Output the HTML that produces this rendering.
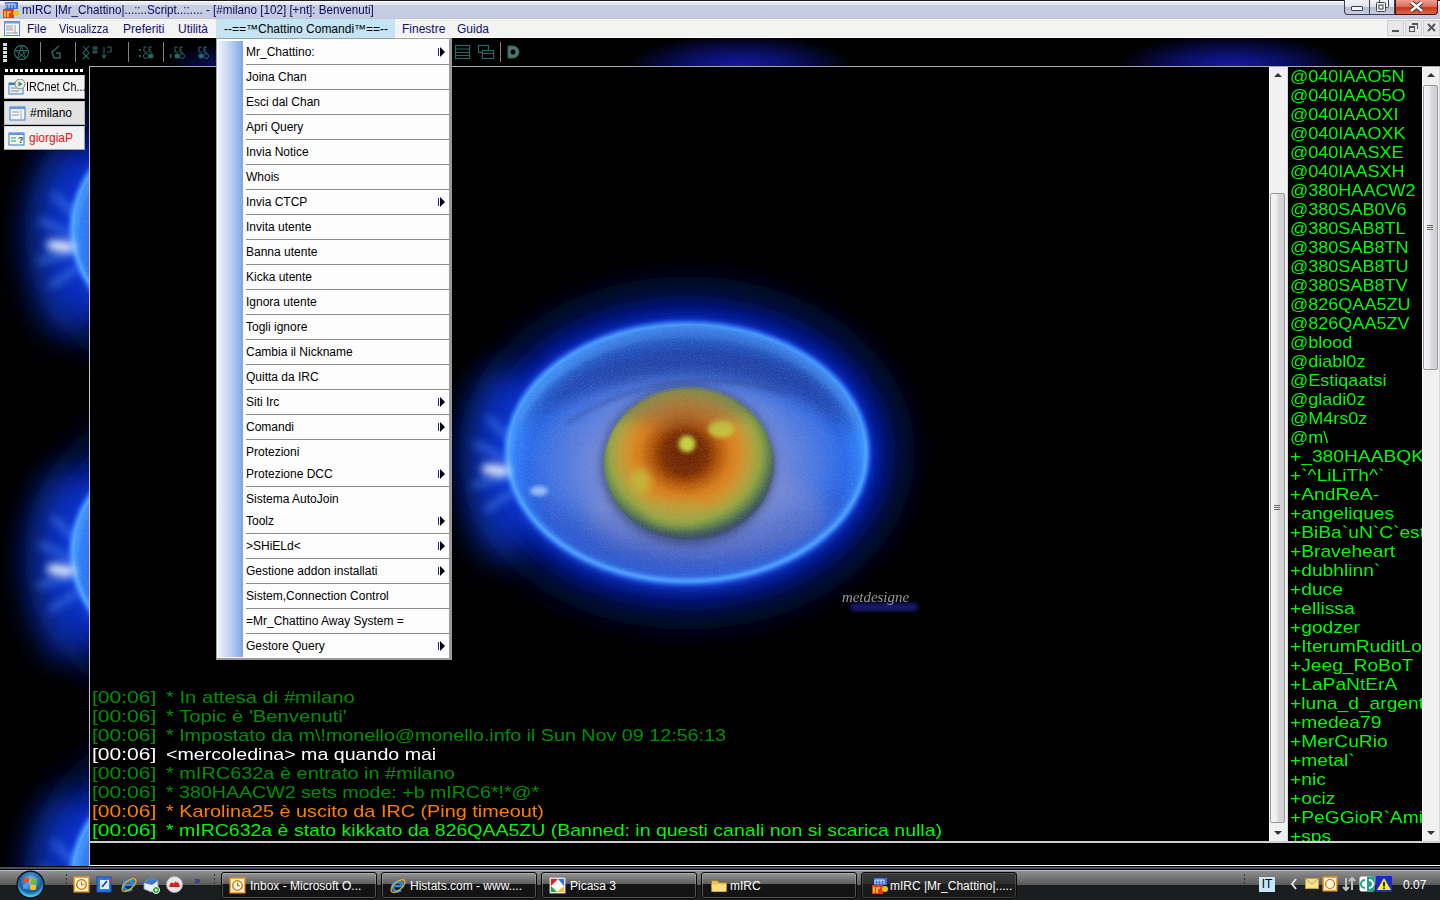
<!DOCTYPE html>
<html><head><meta charset="utf-8">
<style>
*{margin:0;padding:0;box-sizing:border-box}
html,body{width:1440px;height:900px;overflow:hidden;background:#000;font-family:"Liberation Sans",sans-serif}
.a{position:absolute}
#title{left:0;top:0;width:1440px;height:19px;background:linear-gradient(#1a1a1a 0,#1a1a1a 1px,#fff 1px,#fff 2px,#e8eaf3 2px,#e2e5f0 5px,#c8cee2 5px,#c4cadf 18px,#c0c4dc 18px);}
#title .t{left:22px;top:3px;font-size:12px;color:#0a0a5e;white-space:pre;transform:scaleX(0.97);transform-origin:0 0}
#menubar{left:0;top:19px;width:1440px;height:19px;background:#f3f3f1;border-bottom:1px solid #fff}
#menubar .m{top:3px;font-size:12px;color:#10106a;white-space:pre}
#hl{left:216px;top:0;width:179px;height:19px;background:#c4e4f4}
#tb{left:0;top:38px;width:1440px;height:28px;overflow:hidden}
#bgsvg{left:0;top:0}
#sw{left:0;top:66px;width:89px;height:800px}
.swb{left:4px;width:81px;height:24px;background:#f2f2f2;border:1px solid #d8d8d8;border-bottom-color:#a0a0a0;border-right-color:#a0a0a0;font-size:12px;white-space:pre}
#chatwin{left:89px;top:66px;width:1351px;height:800px;background:#000;border-top:1px solid #a8a8a8;border-left:1px solid #a8a8a8}
#chat{left:0;top:0;width:1179px;height:774px;overflow:hidden;background:#000}
.cl{font-size:17px;white-space:pre;transform-origin:0 0;line-height:19px}
#nick{left:1198px;top:0;width:134px;height:774px;overflow:hidden;background:#000}
.nk{left:2px;font-size:17px;white-space:pre;color:#00fc00;line-height:19px;transform-origin:0 0}
#taskbar{left:0;top:866px;width:1440px;height:34px;background:linear-gradient(#000 0,#000 1px,#4a5066 1px,#4a5066 3px,#000 3px,#000 4px,#c0c2c0 4px,#c0c2c0 5px,#8e8e8e 5px,#5a5a5a 19px,#1c1d1f 19px,#1c1d1f 34px)}
#menu{left:216px;top:38px;width:236px;height:622px;background:#fdfdfd;border:1px solid #a0a0a0;border-right:3px solid #9a9a9a;border-bottom:2px solid #9a9a9a}
#mgrad{left:1px;top:2px;width:25px;height:616px;background:linear-gradient(90deg,#eef2fc,#c8d8f2 40%,#7ea6e6)}
.mi{left:29px;height:22px;line-height:22px;font-size:12px;color:#000;white-space:pre}
.sep{left:29px;width:203px;height:1px;background:#8c8c8c}
.arr{left:223px;width:0;height:0;border-top:5px solid transparent;border-bottom:5px solid transparent;border-left:5px solid #000}
.arr:before{content:"";position:absolute;left:-7px;top:-4px;width:1px;height:8px;background:#1a2a8a}

.sb{background:#f0f0f0;border-left:1px solid #fff;border-right:1px solid #d8d8d8}
.thumb{border:1px solid #9a9a9a;border-radius:2px;background:linear-gradient(90deg,#f6f6f6,#ececec 45%,#d8d8dc 55%,#d0d0d4)}
.grip{width:6px;height:1px;background:#6a6a6a;box-shadow:0 2px 0 #6a6a6a,0 4px 0 #6a6a6a}
.uarr{width:0;height:0;border-left:4px solid transparent;border-right:4px solid transparent;border-bottom:4px solid #333}
.darr{width:0;height:0;border-left:4px solid transparent;border-right:4px solid transparent;border-top:4px solid #333}

.tbb{top:6px;height:27px;border:1px solid #0a0a0a;border-radius:3px;background:linear-gradient(#9a9a9a 0,#7a7a7a 5px,#5e5e5e 11px,#151515 11px,#121212 27px);box-shadow:inset 0 0 0 1px rgba(200,200,200,0.35)}
.tbb.act{background:linear-gradient(#3a3a3a 0,#2e2e2e 11px,#1c1c1c 11px,#161616 27px);box-shadow:inset 0 0 0 1px rgba(120,120,120,0.4)}
.tbt{top:6px;left:28px;font-size:12px;color:#fff;white-space:pre}
.dots{width:1px;height:10px;background:repeating-linear-gradient(#333 0,#333 2px,transparent 2px,transparent 4px)}
</style></head><body>
<svg width="0" height="0" style="position:absolute">
<defs>
 <radialGradient id="gGlow" cx="0.5" cy="0.5" r="0.5">
  <stop offset="0" stop-color="#1a50e8"/>
  <stop offset="0.74" stop-color="#1a5cf0"/>
  <stop offset="0.77" stop-color="#0c40d8"/>
  <stop offset="0.81" stop-color="#0a2cb8"/>
  <stop offset="0.86" stop-color="#061c8c"/>
  <stop offset="0.91" stop-color="#040f5a"/>
  <stop offset="0.96" stop-color="#020628"/>
  <stop offset="1" stop-color="#000" stop-opacity="0"/>
 </radialGradient>
 <radialGradient id="gIn" cx="0.5" cy="0.55" r="0.5">
  <stop offset="0" stop-color="#8090d0"/>
  <stop offset="0.5" stop-color="#7288d8"/>
  <stop offset="0.72" stop-color="#4a78e0"/>
  <stop offset="0.88" stop-color="#2c6ae8"/>
  <stop offset="0.96" stop-color="#3080f8"/>
  <stop offset="1" stop-color="#4898ff"/>
 </radialGradient>
 <radialGradient id="gIris" cx="0.476" cy="0.433" r="0.56">
  <stop offset="0" stop-color="#6e2800"/>
  <stop offset="0.24" stop-color="#843400"/>
  <stop offset="0.36" stop-color="#b45808"/>
  <stop offset="0.48" stop-color="#d87c18"/>
  <stop offset="0.6" stop-color="#d49028"/>
  <stop offset="0.7" stop-color="#b8a036"/>
  <stop offset="0.79" stop-color="#94a440"/>
  <stop offset="0.87" stop-color="#688848"/>
  <stop offset="0.94" stop-color="#446058"/>
  <stop offset="1" stop-color="#384c6c"/>
 </radialGradient>
 <clipPath id="cpIris"><ellipse cx="2" cy="11" rx="85" ry="76"/></clipPath>
 <filter id="fb1" x="-20%" y="-20%" width="140%" height="140%"><feGaussianBlur stdDeviation="1"/></filter>
 <filter id="fb2" x="-20%" y="-20%" width="140%" height="140%"><feGaussianBlur stdDeviation="2"/></filter>
 <filter id="fb4" x="-30%" y="-30%" width="160%" height="160%"><feGaussianBlur stdDeviation="4"/></filter>
 <filter id="fb16" x="-50%" y="-50%" width="200%" height="200%"><feGaussianBlur stdDeviation="16"/></filter>
 <filter id="fb12" x="-50%" y="-50%" width="200%" height="200%"><feGaussianBlur stdDeviation="12"/></filter>
 <filter id="fb8" x="-50%" y="-50%" width="200%" height="200%"><feGaussianBlur stdDeviation="8"/></filter>
 <filter id="noise" x="0" y="0" width="100%" height="100%"><feTurbulence type="fractalNoise" baseFrequency="0.9" numOctaves="1" seed="3"/><feColorMatrix values="0 0 0 0 0.55  0 0 0 0 0.6  0 0 0 0 0.95  0 0 0 1.6 -0.75"/><feComposite in2="SourceGraphic" operator="in"/></filter>
 <clipPath id="cpIn"><ellipse cx="0" cy="0" rx="176" ry="126"/></clipPath>
 <g id="eye">
  <ellipse cx="0" cy="0" rx="180" ry="129" fill="none" stroke="#020838" stroke-width="96" filter="url(#fb12)"/>
  <ellipse cx="0" cy="0" rx="180" ry="129" fill="none" stroke="#06188a" stroke-width="46" filter="url(#fb8)"/>
  <ellipse cx="0" cy="0" rx="180" ry="129" fill="none" stroke="#0a2cb8" stroke-width="18" filter="url(#fb4)"/>
  <ellipse cx="-185" cy="12" rx="38" ry="95" fill="#0c3ad8" opacity="0.7" filter="url(#fb16)"/>
  <ellipse cx="0" cy="0" rx="180" ry="129" fill="none" stroke="#1e5cf8" stroke-width="6" filter="url(#fb2)"/>
  <ellipse cx="0" cy="0" rx="180" ry="129" fill="url(#gIn)"/>
  <path d="M-178,20 Q-130,128 0,130 Q130,128 178,15 Q140,75 0,80 Q-140,75 -178,20Z" fill="#2a48b8" opacity="0.6" filter="url(#fb12)"/>
  <ellipse cx="0" cy="0" rx="179" ry="128" fill="none" stroke="#3c90ff" stroke-width="6" filter="url(#fb2)"/><ellipse cx="0" cy="0" rx="179" ry="128" fill="none" stroke="#6cb4ff" stroke-width="3" opacity="0.55" filter="url(#fb1)"/>
  <path d="M-150,-40 Q-60,-115 60,-100 Q140,-85 165,-20 Q120,-70 40,-78 Q-60,-85 -150,-40Z" fill="#2040a0" opacity="0.55" filter="url(#fb8)"/>
  <path d="M-120,-30 Q-20,-95 100,-60" fill="none" stroke="#283c80" stroke-width="3" opacity="0.5" filter="url(#fb2)"/>
  <ellipse cx="20" cy="60" rx="120" ry="45" fill="#8a90c8" opacity="0.35" filter="url(#fb8)"/>
  <path d="M-170,-20 Q-120,-118 0,-122 Q130,-118 172,-15 Q110,-72 0,-80 Q-110,-75 -170,-20Z" fill="#1c3894" opacity="0.6" filter="url(#fb8)"/>
  <ellipse cx="1" cy="12" rx="88" ry="81" fill="#30406a" opacity="0.6" filter="url(#fb4)"/>
  <ellipse cx="2" cy="11" rx="85" ry="76" fill="url(#gIris)" filter="url(#fb1)"/>
  <ellipse cx="-2" cy="1" rx="22" ry="22" fill="#6a2200" opacity="0.5" filter="url(#fb4)"/>
  <circle cx="0" cy="-9" r="8.5" fill="#c8d040" filter="url(#fb2)"/>
  <ellipse cx="34" cy="-24" rx="13" ry="9" fill="#c8d040" opacity="0.85" filter="url(#fb2)"/>
  <ellipse cx="-46" cy="27" rx="10" ry="12" fill="#b8d040" opacity="0.6" filter="url(#fb4)"/>
  <ellipse cx="-10" cy="60" rx="30" ry="14" fill="#a8a840" opacity="0.4" filter="url(#fb4)"/>
  <g clip-path="url(#cpIris)"><ellipse cx="-10" cy="-60" rx="95" ry="32" fill="#283868" opacity="0.25" filter="url(#fb8)"/></g>
  <rect x="-176" y="-126" width="352" height="252" fill="#fff" filter="url(#noise)" clip-path="url(#cpIn)" opacity="0.35"/>
  <g filter="url(#fb4)" stroke-linecap="round">
   <path d="M-182,18 L-200,16" stroke="#e8f4ff" stroke-width="10"/>
   <path d="M-182,5 L-210,-8 M-182,25 L-212,32 M-178,-15 L-198,-34 M-176,40 L-200,56" stroke="#5a9cff" stroke-width="7" opacity="0.45"/>
  </g>
  <ellipse cx="-148" cy="38" rx="9" ry="5" fill="#c0e0ff" opacity="0.7" filter="url(#fb2)"/>
 </g>
</defs></svg>
<div id="bgsvg" class="a" style="left:0;top:38px;width:1440px;height:28px;background:radial-gradient(90px 30px at 252px 32px,#121890,#080e58 45%,rgba(0,0,40,0) 100%),radial-gradient(115px 34px at 740px 30px,#161ca8,#0a1068 45%,rgba(0,0,40,0) 100%),radial-gradient(115px 34px at 1232px 30px,#161ca8,#0a1068 45%,rgba(0,0,40,0) 100%)"></div>
<svg class="a" width="89" height="799" style="left:0;top:67px">
 <use href="#eye" transform="translate(252,162)"/>
 <use href="#eye" transform="translate(252,486)"/>
 <use href="#eye" transform="translate(252,810)"/>
</svg>
<div id="title" class="a"><svg class="a" style="left:2px;top:1px" width="18" height="17"><rect x="3" y="1" width="13" height="7" fill="#3a70e0"/><path d="M4,7 V3 H7 V7 M7,3 H10 V7 M10,3 H13 V7" stroke="#fff" stroke-width="0.8" fill="none"/><rect x="1" y="8" width="11" height="9" fill="#e04010"/><path d="M3,10 V16 M6,16 V11 H9" stroke="#ffd040" stroke-width="1.5" fill="none"/><circle cx="14" cy="12" r="3" fill="#f0c020"/></svg>
<div class="a" style="left:1344px;top:0;width:51px;height:15px;border:1px solid #3c4050;border-top:none;border-radius:0 0 0 4px;background:linear-gradient(#f2f4f8,#e0e4ec 45%,#b4bcd0 55%,#c8d0e0)"></div>
<div class="a" style="left:1369px;top:0;width:1px;height:14px;background:#3c4050"></div>
<div class="a" style="left:1351px;top:6px;width:12px;height:5px;border:1px solid #3c4050;border-radius:1px;background:#f4f4f0"></div>
<svg class="a" style="left:1374px;top:0" width="18" height="14"><rect x="5.5" y="-1.5" width="9" height="9" rx="1" fill="#f0f0ec" stroke="#3c4050"/><rect x="2.5" y="2.5" width="9" height="9" rx="1" fill="#f4f4f0" stroke="#3c4050"/><rect x="5" y="5" width="4" height="4" fill="#f4f4f0" stroke="#3c4050"/></svg>

<div class="a" style="left:1395px;top:0;width:43px;height:15px;border:1px solid #4a1010;border-top:none;border-radius:0 0 4px 0;background:linear-gradient(#f0a090,#e07060 45%,#c83818 55%,#d86848)"></div>
<svg class="a" style="left:1409px;top:1px" width="16" height="12"><path d="M2,1 L13,10 M13,1 L2,10" stroke="#3a3040" stroke-width="4.5"/><path d="M2,1 L13,10 M13,1 L2,10" stroke="#fff" stroke-width="2.5"/></svg>
<span class="a t">mIRC |Mr_Chattino|...::..Script..::.... - [#milano [102] [+nt]: Benvenuti]</span></div>
<div id="menubar" class="a">
 <div id="hl" class="a"></div>
<svg class="a" style="left:4px;top:2px" width="16" height="15"><rect x="0.5" y="0.5" width="15" height="14" fill="#f8f8f8" stroke="#4a88d8"/><rect x="0.5" y="0.5" width="15" height="2" fill="#6aa0e8"/><path d="M2,5 H9 M2,7 H9 M2,9 H9 M11,4 V13 M2,12 H14" stroke="#999" stroke-width="1"/></svg>
 <div class="a" style="left:1387px;top:1px;width:17px;height:16px;background:#e8e8e8;border:1px solid #d0d0d0"></div>
 <div class="a" style="left:1392px;top:11px;width:7px;height:2px;background:#555"></div>
 <div class="a" style="left:1405px;top:1px;width:17px;height:16px;background:#e8e8e8;border:1px solid #d0d0d0"></div>
 <div class="a" style="left:1409px;top:7px;width:6px;height:6px;border:1.5px solid #555;border-top-width:2px"></div>
 <div class="a" style="left:1412px;top:4px;width:6px;height:6px;border-top:2px solid #555;border-right:1.5px solid #555"></div>
 <div class="a" style="left:1423px;top:1px;width:17px;height:16px;background:#e8e8e8;border:1px solid #d0d0d0"></div>
 <svg class="a" style="left:1426px;top:3px" width="12" height="12"><path d="M2,2 L9,9 M9,2 L2,9" stroke="#555" stroke-width="2"/></svg>

 <span class="a m" style="left:27px">File</span>
 <span class="a m" style="left:59px;transform:scaleX(0.92);transform-origin:0 0">Visualizza</span>
 <span class="a m" style="left:123px">Preferiti</span>
 <span class="a m" style="left:178px">Utilità</span>
 <span class="a m" style="left:224px;color:#000">--==™Chattino Comandi™==--</span>
 <span class="a m" style="left:402px">Finestre</span>
 <span class="a m" style="left:457px">Guida</span>
</div>
<div id="tbicons" class="a" style="left:0;top:38px;width:1440px;height:28px;opacity:0.85">
 <div class="a" style="left:3px;top:5px;width:4px;height:19px;background:repeating-linear-gradient(#fff 0,#fff 3px,transparent 3px,transparent 4px)"></div>
 <svg class="a" style="left:13px;top:6px" width="18" height="17"><circle cx="8.5" cy="8.5" r="7" fill="none" stroke="#2e7a76" stroke-width="1.3"/><path d="M8.5,2 L12.5,14 L2.5,6.5 L14.5,6.5 L4.5,14Z" fill="none" stroke="#2e7a76" stroke-width="1"/></svg>
 <div class="a" style="left:40px;top:4px;width:1px;height:20px;background:#9a9a9a"></div>
 <svg class="a" style="left:48px;top:6px" width="16" height="17"><path d="M11,2 L4,8 L6,14 L12,14 L12,9 L8,9" fill="none" stroke="#2e7a76" stroke-width="1.6"/></svg>
 <div class="a" style="left:75px;top:4px;width:1px;height:20px;background:#9a9a9a"></div>
 <svg class="a" style="left:80px;top:6px" width="40" height="18"><path d="M3,2 L9,9 L3,15 M9,2 L3,9 L9,15" stroke="#2e7a76" stroke-width="1.1" fill="none"/><path d="M12,4 H18 M12,8 H18 M14,2 V10 M16,2 V10" stroke="#2e7a76" stroke-width="1.1"/><path d="M24,3 V14 M22,11 L24,14 L26,11 M27,3 H31 V8 H27" stroke="#2e7a76" stroke-width="1.1" fill="none"/></svg>
 <div class="a" style="left:128px;top:4px;width:1px;height:20px;background:#9a9a9a"></div>
 <svg class="a" style="left:138px;top:6px" width="18" height="17"><path d="M6,3 H9 M6,3 V8 H9 M11,3 H14 M11,3 V8 H14 M11,5.5 H13" stroke="#2e7a76" stroke-width="1" fill="none"/><circle cx="8" cy="12" r="2.5" fill="none" stroke="#2e7a76"/><circle cx="13" cy="12" r="2.5" fill="#2e7a76"/><rect x="1" y="5" width="2" height="2" fill="#2e7a76"/><rect x="1" y="11" width="2" height="2" fill="#2e7a76"/></svg>
 <div class="a" style="left:163px;top:4px;width:1px;height:20px;background:#9a9a9a"></div>
 <svg class="a" style="left:169px;top:6px" width="18" height="17"><path d="M6,3 H9 M6,3 V8 H9 M11,3 H14 M11,3 V8 H14 M11,5.5 H13" stroke="#2e7a76" stroke-width="1" fill="none"/><circle cx="8" cy="12" r="2.5" fill="#2e7a76"/><circle cx="13" cy="12" r="2.5" fill="none" stroke="#2e7a76"/><rect x="1" y="10" width="1.5" height="4" fill="#2e7a76"/></svg>
 <svg class="a" style="left:193px;top:6px" width="18" height="17"><path d="M6,3 H9 M6,3 V8 H9 M11,3 H14 M11,3 V8 H14 M11,5.5 H13" stroke="#2e7a76" stroke-width="1" fill="none"/><circle cx="8" cy="12" r="2.5" fill="#2e7a76"/><circle cx="13" cy="12" r="2.5" fill="none" stroke="#2e7a76"/></svg>
 <svg class="a" style="left:454px;top:5px" width="18" height="18"><rect x="1.5" y="2.5" width="14" height="13" fill="none" stroke="#2e7a76" stroke-width="1.2"/><path d="M1.5,6 H15.5 M1.5,9.5 H15.5 M1.5,12.5 H15.5" stroke="#2e7a76" stroke-width="1"/></svg>
 <svg class="a" style="left:477px;top:5px" width="18" height="18"><rect x="1.5" y="2.5" width="10" height="7" fill="none" stroke="#2e7a76" stroke-width="1.2"/><rect x="5.5" y="7.5" width="11" height="8" fill="#000" stroke="#2e7a76" stroke-width="1.2"/><path d="M5.5,10.5 H16.5" stroke="#2e7a76"/></svg>
 <div class="a" style="left:500px;top:4px;width:1px;height:20px;background:#9a9a9a"></div>
 <svg class="a" style="left:505px;top:5px" width="18" height="18"><path d="M3,3 H8 A6,6 0 0 1 8,15 H3Z" fill="#5a8a88" stroke="#2e7a76"/><circle cx="8" cy="9" r="2.5" fill="#000"/></svg>
</div>
<div id="sw" class="a">
 <div class="a" style="left:5px;top:3px;width:79px;height:3px;background:repeating-linear-gradient(90deg,#fff 0,#fff 3px,transparent 3px,transparent 5px)"></div>
 <div class="a swb" style="top:9px;background:#f2f2f2"><svg class="a" style="left:3px;top:3px" width="18" height="17"><rect x="1" y="4" width="14" height="11" fill="#e8f0f8" stroke="#3a78c8"/><rect x="1" y="4" width="14" height="2" fill="#3a78c8"/><line x1="3" y1="9" x2="9" y2="9" stroke="#888"/><line x1="3" y1="12" x2="11" y2="12" stroke="#888"/><circle cx="12" cy="5" r="5" fill="#e8e8e8" stroke="#888"/><path d="M10.5,2.5 L14.5,5 L10.5,7.5Z" fill="#2a9a2a"/></svg><span class="a" style="left:21px;top:4px;color:#000;transform:scaleX(0.9);transform-origin:0 0">IRCnet Ch...</span></div>
 <div class="a swb" style="top:35px;background:#e2e2e2;border-color:#c8c8c8 #b8b8b8 #b8b8b8 #c8c8c8"><svg class="a" style="left:4px;top:3px" width="18" height="17"><rect x="1" y="2" width="15" height="13" fill="#f4f6fa" stroke="#3a78c8"/><rect x="1" y="2" width="15" height="2" fill="#5a98e8"/><line x1="3" y1="7" x2="10" y2="7" stroke="#999"/><line x1="3" y1="10" x2="10" y2="10" stroke="#999"/><line x1="12" y1="5" x2="12" y2="15" stroke="#aaa"/></svg><span class="a" style="left:25px;top:4px;color:#000">#milano</span></div>
 <div class="a swb" style="top:60px;background:#f2f2f2"><svg class="a" style="left:3px;top:3px" width="18" height="17"><rect x="1" y="3" width="15" height="12" fill="#f0f4f0" stroke="#3a78c8"/><rect x="1" y="3" width="15" height="2" fill="#5a98e8"/><line x1="3" y1="8" x2="8" y2="8" stroke="#3a9a3a"/><line x1="3" y1="11" x2="8" y2="11" stroke="#3a9a3a"/><text x="10" y="13" font-size="9" font-weight="bold" fill="#1a6a1a" font-family="Liberation Sans">?</text></svg><span class="a" style="left:24px;top:4px;color:#e81010">giorgiaP</span></div>
</div>
<div id="chatwin" class="a">
 <div id="chat" class="a"><svg class="a" style="left:0;top:0" width="1179" height="774"><use href="#eye" transform="translate(597,386)"/>
<rect x="760" y="536" width="68" height="8" rx="4" fill="#2a2ac0" opacity="0.6" filter="url(#fb2)"/>
<text x="752" y="534.5" font-family="Liberation Serif" font-style="italic" font-size="14" fill="#d8d8e0" opacity="0.7" textLength="67" lengthAdjust="spacingAndGlyphs">metdesigne</text></svg>
<div class="a cl" style="left:2px;top:621px;color:#009300;transform:scaleX(1.238)">[00:06]</div><div class="a cl" style="left:76px;top:621px;color:#009300;transform:scaleX(1.188)">* In attesa di #milano</div>
<div class="a cl" style="left:2px;top:640px;color:#009300;transform:scaleX(1.238)">[00:06]</div><div class="a cl" style="left:76px;top:640px;color:#009300;transform:scaleX(1.191)">* Topic è 'Benvenuti'</div>
<div class="a cl" style="left:2px;top:659px;color:#009300;transform:scaleX(1.238)">[00:06]</div><div class="a cl" style="left:76px;top:659px;color:#009300;transform:scaleX(1.159)">* Impostato da m\!monello@monello.info il Sun Nov 09 12:56:13</div>
<div class="a cl" style="left:2px;top:678px;color:#ffffff;transform:scaleX(1.238)">[00:06]</div><div class="a cl" style="left:76px;top:678px;color:#ffffff;transform:scaleX(1.153)">&lt;mercoledina&gt; ma quando mai</div>
<div class="a cl" style="left:2px;top:697px;color:#009300;transform:scaleX(1.238)">[00:06]</div><div class="a cl" style="left:76px;top:697px;color:#009300;transform:scaleX(1.171)">* mIRC632a è entrato in #milano</div>
<div class="a cl" style="left:2px;top:716px;color:#009300;transform:scaleX(1.238)">[00:06]</div><div class="a cl" style="left:76px;top:716px;color:#009300;transform:scaleX(1.152)">* 380HAACW2 sets mode: +b mIRC6*!*@*</div>
<div class="a cl" style="left:2px;top:735px;color:#fc7f00;transform:scaleX(1.238)">[00:06]</div><div class="a cl" style="left:76px;top:735px;color:#fc7f00;transform:scaleX(1.166)">* Karolina25 è uscito da IRC (Ping timeout)</div>
<div class="a cl" style="left:2px;top:754px;color:#00fc00;transform:scaleX(1.238)">[00:06]</div><div class="a cl" style="left:76px;top:754px;color:#00fc00;transform:scaleX(1.147)">* mIRC632a è stato kikkato da 826QAA5ZU (Banned: in questi canali non si scarica nulla)</div>
</div>
 <div id="nick" class="a">
<div class="a nk" style="top:0px;transform:scaleX(1.06)">@040IAAO5N</div>
<div class="a nk" style="top:19px;transform:scaleX(1.06)">@040IAAO5O</div>
<div class="a nk" style="top:38px;transform:scaleX(1.06)">@040IAAOXI</div>
<div class="a nk" style="top:57px;transform:scaleX(1.06)">@040IAAOXK</div>
<div class="a nk" style="top:76px;transform:scaleX(1.06)">@040IAASXE</div>
<div class="a nk" style="top:95px;transform:scaleX(1.06)">@040IAASXH</div>
<div class="a nk" style="top:114px;transform:scaleX(1.06)">@380HAACW2</div>
<div class="a nk" style="top:133px;transform:scaleX(1.06)">@380SAB0V6</div>
<div class="a nk" style="top:152px;transform:scaleX(1.06)">@380SAB8TL</div>
<div class="a nk" style="top:171px;transform:scaleX(1.06)">@380SAB8TN</div>
<div class="a nk" style="top:190px;transform:scaleX(1.06)">@380SAB8TU</div>
<div class="a nk" style="top:209px;transform:scaleX(1.06)">@380SAB8TV</div>
<div class="a nk" style="top:228px;transform:scaleX(1.06)">@826QAA5ZU</div>
<div class="a nk" style="top:247px;transform:scaleX(1.06)">@826QAA5ZV</div>
<div class="a nk" style="top:266px;transform:scaleX(1.06)">@blood</div>
<div class="a nk" style="top:285px;transform:scaleX(1.06)">@diabl0z</div>
<div class="a nk" style="top:304px;transform:scaleX(1.06)">@Estiqaatsi</div>
<div class="a nk" style="top:323px;transform:scaleX(1.06)">@gladi0z</div>
<div class="a nk" style="top:342px;transform:scaleX(1.06)">@M4rs0z</div>
<div class="a nk" style="top:361px;transform:scaleX(1.06)">@m\</div>
<div class="a nk" style="top:380px;transform:scaleX(1.13)">+_380HAABQK1</div>
<div class="a nk" style="top:399px;transform:scaleX(1.13)">+`^LiLiTh^`</div>
<div class="a nk" style="top:418px;transform:scaleX(1.13)">+AndReA-</div>
<div class="a nk" style="top:437px;transform:scaleX(1.13)">+angeliques</div>
<div class="a nk" style="top:456px;transform:scaleX(1.13)">+BiBa`uN`C`est</div>
<div class="a nk" style="top:475px;transform:scaleX(1.13)">+Braveheart</div>
<div class="a nk" style="top:494px;transform:scaleX(1.13)">+dubhlinn`</div>
<div class="a nk" style="top:513px;transform:scaleX(1.13)">+duce</div>
<div class="a nk" style="top:532px;transform:scaleX(1.13)">+ellissa</div>
<div class="a nk" style="top:551px;transform:scaleX(1.13)">+godzer</div>
<div class="a nk" style="top:570px;transform:scaleX(1.13)">+IterumRuditLo</div>
<div class="a nk" style="top:589px;transform:scaleX(1.13)">+Jeeg_RoBoT</div>
<div class="a nk" style="top:608px;transform:scaleX(1.13)">+LaPaNtErA</div>
<div class="a nk" style="top:627px;transform:scaleX(1.13)">+luna_d_argento</div>
<div class="a nk" style="top:646px;transform:scaleX(1.13)">+medea79</div>
<div class="a nk" style="top:665px;transform:scaleX(1.13)">+MerCuRio</div>
<div class="a nk" style="top:684px;transform:scaleX(1.13)">+metal`</div>
<div class="a nk" style="top:703px;transform:scaleX(1.13)">+nic</div>
<div class="a nk" style="top:722px;transform:scaleX(1.13)">+ociz</div>
<div class="a nk" style="top:741px;transform:scaleX(1.13)">+PeGGioR`Amico</div>
<div class="a nk" style="top:760px;transform:scaleX(1.13)">+sps</div>
</div>
</div>
<div id="chrome">
 <div class="a" style="left:89px;top:66px;width:1351px;height:1px;background:#a8a8a8"></div>
 <div class="a" style="left:89px;top:66px;width:1px;height:800px;background:#c8c8c8"></div>
 <div class="a sb" style="left:1269px;top:67px;width:19px;height:774px"></div>
 <div class="a uarr" style="left:1274px;top:73px"></div>
 <div class="a darr" style="left:1274px;top:831px"></div>
 <div class="a thumb" style="left:1270px;top:193px;width:15px;height:630px"></div>
 <div class="a grip" style="left:1274px;top:505px"></div>
 <div class="a sb" style="left:1422px;top:67px;width:18px;height:774px"></div>
 <div class="a uarr" style="left:1427px;top:73px"></div>
 <div class="a darr" style="left:1427px;top:831px"></div>
 <div class="a thumb" style="left:1423px;top:85px;width:15px;height:285px"></div>
 <div class="a grip" style="left:1427px;top:225px"></div>
 <div class="a" style="left:90px;top:841px;width:1350px;height:2px;background:#d0d0d0"></div>
 <div class="a" style="left:90px;top:843px;width:1350px;height:22px;background:#000"></div>
 <div class="a" style="left:89px;top:865px;width:1351px;height:1px;background:#fff"></div>
</div>
<div id="menu" class="a"><div class="a" id="mgrad"></div>
 <div class="a mi" style="top:2px">Mr_Chattino:</div>
 <div class="a arr" style="top:8px"></div>
 <div class="a sep" style="top:25px"></div>
 <div class="a mi" style="top:27px">Joina Chan</div>
 <div class="a sep" style="top:50px"></div>
 <div class="a mi" style="top:52px">Esci dal Chan</div>
 <div class="a sep" style="top:75px"></div>
 <div class="a mi" style="top:77px">Apri Query</div>
 <div class="a sep" style="top:100px"></div>
 <div class="a mi" style="top:102px">Invia Notice</div>
 <div class="a sep" style="top:125px"></div>
 <div class="a mi" style="top:127px">Whois</div>
 <div class="a sep" style="top:150px"></div>
 <div class="a mi" style="top:152px">Invia CTCP</div>
 <div class="a arr" style="top:158px"></div>
 <div class="a sep" style="top:175px"></div>
 <div class="a mi" style="top:177px">Invita utente</div>
 <div class="a sep" style="top:200px"></div>
 <div class="a mi" style="top:202px">Banna utente</div>
 <div class="a sep" style="top:225px"></div>
 <div class="a mi" style="top:227px">Kicka utente</div>
 <div class="a sep" style="top:250px"></div>
 <div class="a mi" style="top:252px">Ignora utente</div>
 <div class="a sep" style="top:275px"></div>
 <div class="a mi" style="top:277px">Togli ignore</div>
 <div class="a sep" style="top:300px"></div>
 <div class="a mi" style="top:302px">Cambia il Nickname</div>
 <div class="a sep" style="top:325px"></div>
 <div class="a mi" style="top:327px">Quitta da IRC</div>
 <div class="a sep" style="top:350px"></div>
 <div class="a mi" style="top:352px">Siti Irc</div>
 <div class="a arr" style="top:358px"></div>
 <div class="a sep" style="top:375px"></div>
 <div class="a mi" style="top:377px">Comandi</div>
 <div class="a arr" style="top:383px"></div>
 <div class="a sep" style="top:400px"></div>
 <div class="a mi" style="top:402px">Protezioni</div>
 <div class="a mi" style="top:424px">Protezione DCC</div>
 <div class="a arr" style="top:430px"></div>
 <div class="a sep" style="top:447px"></div>
 <div class="a mi" style="top:449px">Sistema AutoJoin</div>
 <div class="a mi" style="top:471px">Toolz</div>
 <div class="a arr" style="top:477px"></div>
 <div class="a sep" style="top:494px"></div>
 <div class="a mi" style="top:496px">&gt;SHiELd&lt;</div>
 <div class="a arr" style="top:502px"></div>
 <div class="a sep" style="top:519px"></div>
 <div class="a mi" style="top:521px">Gestione addon installati</div>
 <div class="a arr" style="top:527px"></div>
 <div class="a sep" style="top:544px"></div>
 <div class="a mi" style="top:546px">Sistem,Connection Control</div>
 <div class="a sep" style="top:569px"></div>
 <div class="a mi" style="top:571px">=Mr_Chattino Away System =</div>
 <div class="a sep" style="top:594px"></div>
 <div class="a mi" style="top:596px">Gestore Query</div>
 <div class="a arr" style="top:602px"></div>
</div>
<div id="taskbar" class="a">
 <svg class="a" style="left:15px;top:3px" width="31" height="31"><defs><radialGradient id="orb" cx="0.5" cy="0.35" r="0.6"><stop offset="0" stop-color="#a8d0f0"/><stop offset="0.45" stop-color="#3a80c0"/><stop offset="0.75" stop-color="#1a5a98"/><stop offset="1" stop-color="#40c8f8"/></radialGradient></defs>
  <circle cx="15.5" cy="15.5" r="14" fill="#0a0a0a"/><circle cx="15.5" cy="15.5" r="12.8" fill="url(#orb)"/>
  <path d="M9,9 Q12,8 14.5,9 L13.8,14 Q11.5,13 8.5,14Z" fill="#f05020"/><path d="M16,9 Q19,10 22,9 L21.5,14 Q18.5,15 15.5,14Z" fill="#70c030"/>
  <path d="M8.3,15.2 Q11,14.2 13.6,15.2 L13,20 Q10.5,19 8,20Z" fill="#40a0f0"/><path d="M15.3,15.3 Q18.5,16.3 21.3,15.3 L20.8,20.5 Q17.8,21.5 14.8,20.3Z" fill="#f8c020"/>
 </svg>
 <div class="a dots" style="left:66px;top:8px"></div>
 <svg class="a" style="left:73px;top:10px" width="18" height="18"><rect x="0.5" y="0.5" width="16" height="16" fill="#f8a020"/><rect x="2" y="2" width="13" height="13" fill="#fff4d8"/><circle cx="8.5" cy="8.5" r="4.8" fill="none" stroke="#c07010" stroke-width="1.3"/><path d="M8.5,5.5 V8.8 H11" stroke="#c07010" stroke-width="1.1" fill="none"/></svg>
 <svg class="a" style="left:96px;top:10px" width="18" height="18"><rect x="1" y="1" width="14" height="15" fill="#2a7ae8" stroke="#1a50b0"/><rect x="4" y="4" width="9" height="9" fill="#e0f0ff"/><path d="M6,11 L11,5" stroke="#1a3a80" stroke-width="1.5"/><circle cx="15" cy="4" r="1.5" fill="#e03020"/></svg>
 <svg class="a" style="left:120px;top:10px" width="18" height="18"><path d="M4,9 H13.5 A5,5 0 1 0 12,13" stroke="#2a8ae8" stroke-width="2.6" fill="none"/><ellipse cx="9" cy="9" rx="8.5" ry="4" fill="none" stroke="#e8b020" stroke-width="1.3" transform="rotate(-40 9 9)"/></svg>
 <svg class="a" style="left:143px;top:10px" width="18" height="18"><path d="M1,7 L7,2 L15,5 L15,13 L8,16 L1,13Z" fill="#e8eef8" stroke="#8898b0" stroke-width="0.8"/><path d="M1,7 L7,2 L15,5 L9,9Z" fill="#3a78d8"/><circle cx="13" cy="14" r="3.5" fill="#20a030" stroke="#fff"/><path d="M12,12.3 L15,14 L12,15.7Z" fill="#fff"/></svg>
 <svg class="a" style="left:166px;top:10px" width="18" height="18"><circle cx="8.5" cy="8.5" r="8" fill="#e8e8e8" stroke="#aaa" stroke-width="0.8"/><path d="M3,11 Q5,4 8,8 Q9,3 10,7 Q12,4 14,11Z" fill="#d82020"/></svg>
 <div class="a" style="left:194px;top:8px;font-size:11px;font-weight:bold;color:#1a2a9a;letter-spacing:-1px">»</div>
 <div class="a dots" style="left:214px;top:8px"></div>
 <div class="a tbb" style="left:221px;width:156px"><svg class="a" style="left:7px;top:4px" width="17" height="17"><rect x="0.5" y="0.5" width="16" height="16" fill="#f8a020"/><rect x="2" y="2" width="13" height="13" fill="#fff4d8"/><circle cx="8.5" cy="8.5" r="4.8" fill="none" stroke="#c07010" stroke-width="1.3"/><path d="M8.5,5.5 V8.8 H11" stroke="#c07010" stroke-width="1.1" fill="none"/></svg><span class="a tbt">Inbox - Microsoft O...</span></div>
 <div class="a tbb" style="left:381px;width:156px"><svg class="a" style="left:7px;top:4px" width="18" height="17"><path d="M4,9 H13.5 A5,5 0 1 0 12,13" stroke="#2a8ae8" stroke-width="2.6" fill="none"/><ellipse cx="9" cy="9" rx="8.5" ry="4" fill="none" stroke="#e8b020" stroke-width="1.3" transform="rotate(-40 9 9)"/></svg><span class="a tbt">Histats.com - www....</span></div>
 <div class="a tbb" style="left:541px;width:156px"><svg class="a" style="left:7px;top:4px" width="17" height="17"><rect x="1" y="1" width="15" height="15" fill="#fff" stroke="#ccc"/><path d="M2,2 L9,2 L2,9Z" fill="#e02020"/><path d="M15,2 L15,9 L9,2Z" fill="#3a6ae0"/><path d="M2,15 L2,9 L8,15Z" fill="#20a040"/><path d="M15,15 L8,15 L15,9Z" fill="#f0c020"/></svg><span class="a tbt">Picasa 3</span></div>
 <div class="a tbb" style="left:701px;width:156px"><svg class="a" style="left:9px;top:5px" width="17" height="15"><path d="M0.5,2.5 H6 L8,4.5 H15.5 V13.5 H0.5Z" fill="#e8c050" stroke="#a08020"/><path d="M0.5,6.5 H15.5 L14.5,13.5 H1.5Z" fill="#f8e080"/></svg><span class="a tbt">mIRC</span></div>
 <div class="a tbb act" style="left:861px;width:156px"><svg class="a" style="left:9px;top:4px" width="18" height="17"><rect x="3" y="1" width="13" height="7" fill="#3a70e0"/><path d="M4,7 V3 H7 V7 M7,3 H10 V7 M10,3 H13 V7" stroke="#fff" stroke-width="0.8" fill="none"/><rect x="1" y="8" width="11" height="9" fill="#e04010"/><path d="M3,10 V16 M6,16 V11 H9" stroke="#ffd040" stroke-width="1.5" fill="none"/><circle cx="14" cy="12" r="3" fill="#f0c020"/></svg><span class="a tbt">mIRC |Mr_Chattino|.....</span></div>
 <div class="a dots" style="left:1244px;top:8px"></div>
 <div class="a" style="left:1259px;top:11px;width:16px;height:15px;background:#c8e8f8;font-size:12px;color:#000;text-align:center;line-height:15px">IT</div>
 <svg class="a" style="left:1290px;top:12px" width="8" height="12"><path d="M6,1 L2,6 L6,11" stroke="#e0e0e0" stroke-width="2" fill="none"/></svg>
 <svg class="a" style="left:1305px;top:12px" width="14" height="12"><rect x="0.5" y="0.5" width="13" height="10" fill="#f8e090" stroke="#c0a040"/><path d="M0.5,0.5 L7,6 L13.5,0.5" stroke="#c0a040" fill="none"/></svg>
 <svg class="a" style="left:1322px;top:10px" width="16" height="16"><rect x="0.5" y="0.5" width="15" height="15" fill="#f8a020"/><rect x="2" y="2" width="12" height="12" fill="#fff4d8"/><circle cx="8" cy="8" r="4.5" fill="none" stroke="#c07010" stroke-width="1.2"/></svg>
 <svg class="a" style="left:1341px;top:10px" width="16" height="16"><path d="M5,2 V14 M2,11 L5,14 L8,11 M11,14 V2 M8,5 L11,2 L14,5" stroke="#c0c0c0" stroke-width="2" fill="none"/></svg>
 <svg class="a" style="left:1359px;top:10px" width="16" height="16"><rect x="0.5" y="0.5" width="15" height="15" rx="2" fill="#fff"/><rect x="8" y="0.5" width="7.5" height="15" fill="#20a090"/><path d="M6,4 A4,4 0 0 0 6,12" stroke="#20a090" stroke-width="2" fill="none"/><path d="M10,4 A4,4 0 0 1 10,12" stroke="#fff" stroke-width="2" fill="none"/></svg>
 <svg class="a" style="left:1376px;top:10px" width="16" height="16"><rect x="0" y="0" width="16" height="16" fill="#1a2ac8"/><path d="M8,2 L15,14 L1,14Z" fill="#f8f020"/><rect x="7.2" y="6" width="1.6" height="4.5" fill="#000"/><rect x="7.2" y="11.5" width="1.6" height="1.6" fill="#000"/></svg>
 <div class="a" style="left:1403px;top:12px;font-size:12px;color:#fff">0.07</div>
</div>
</body></html>
